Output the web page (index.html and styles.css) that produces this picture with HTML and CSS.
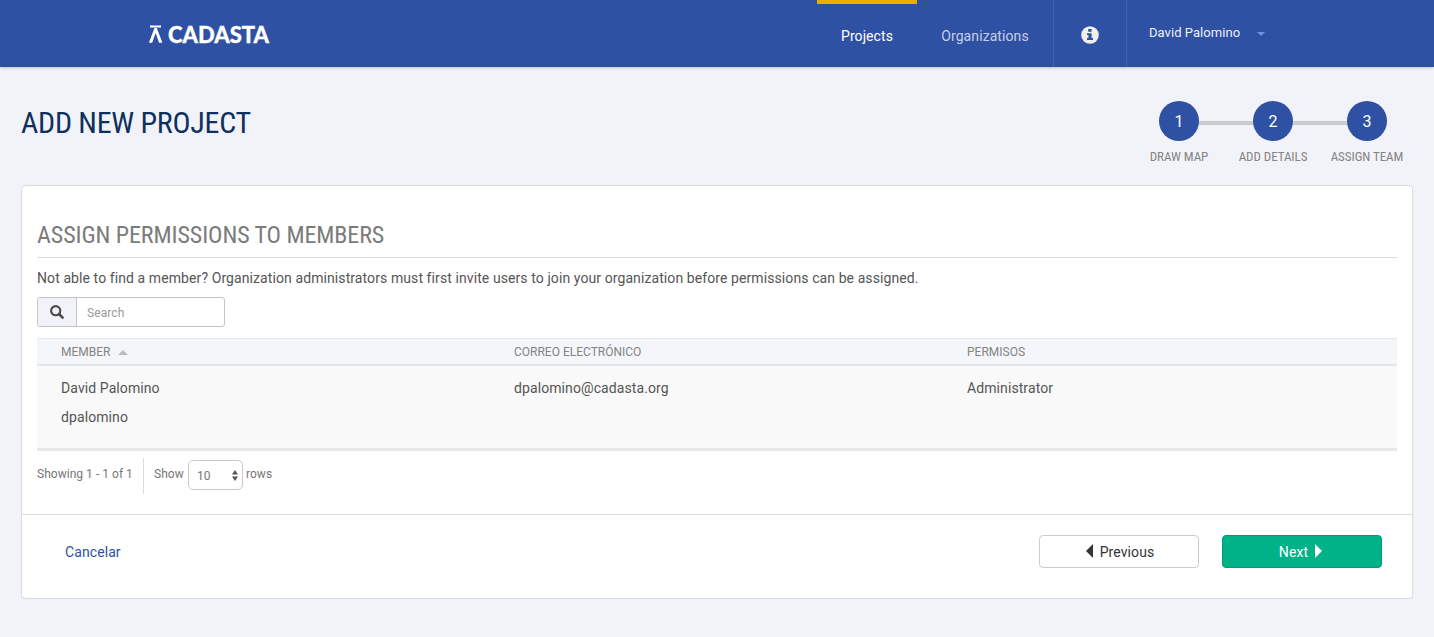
FILE: index.html
```html
<!DOCTYPE html>
<html lang="es">
<head>
<meta charset="utf-8">
<title>Cadasta</title>
<link rel="stylesheet" href="styles.css">
</head>
<body>
<header class="topbar">
  <a class="logo">
    <svg width="130" height="34" viewBox="0 -5 130 34">
      <path d="M2 3.4h11v2.1H2zM6.5 6h2.3l5.6 14.8h-3.3L7.65 11 4.2 20.8H.9z" fill="#fff"/>
      <text class="logo-text" x="20" y="20.6" textLength="101" lengthAdjust="spacingAndGlyphs">CADASTA</text>
    </svg>
  </a>
  <nav class="nav">
    <a class="nav-link active">Projects</a>
    <a class="nav-link">Organizations</a>
    <a class="nav-info">
      <svg width="18" height="18" viewBox="0 0 18 18"><circle cx="9" cy="9" r="8.8" fill="#efefef"/><path d="M7.2 3h3.4v2.7H7.2zM6 7.2h4.6v4.9H12v1.8H6v-1.8h1.4V9H6z" fill="#2e51a3"/></svg>
    </a>
    <a class="nav-user"><span>David Palomino</span><i class="caret"></i></a>
  </nav>
</header>
<main class="page">
  <div class="page-head">
    <h1><span class="condensed">ADD NEW PROJECT</span></h1>
    <ol class="steps">
      <li><b>1</b><span class="condensed">DRAW MAP</span></li>
      <li><b>2</b><span class="condensed">ADD DETAILS</span></li>
      <li><b>3</b><span class="condensed">ASSIGN TEAM</span></li>
    </ol>
  </div>
  <section class="panel">
    <div class="panel-body">
      <h2><span class="condensed">ASSIGN PERMISSIONS TO MEMBERS</span></h2>
      <p class="hint">Not able to find a member? Organization administrators must first invite users to join your organization before permissions can be assigned.</p>
      <div class="search">
        <span class="search-icon"><svg width="14" height="14" viewBox="0 0 14 14"><circle cx="5.7" cy="5.7" r="4.6" fill="none" stroke="#4a4a4a" stroke-width="2.1"/><path d="M9 9l3.6 3.6" stroke="#4a4a4a" stroke-width="2.6" stroke-linecap="round"/></svg></span>
        <span class="search-input">Search</span>
      </div>
      <div class="table">
        <div class="row head"><div><span>MEMBER</span><i class="sort"></i></div><div><span>CORREO ELECTRÓNICO</span></div><div><span>PERMISOS</span></div></div>
        <div class="row data"><div><p>David Palomino</p><p>dpalomino</p></div><div><p>dpalomino@cadasta.org</p></div><div><p>Administrator</p></div></div>
      </div>
      <div class="table-foot">
        <span class="showing">Showing 1 - 1 of 1</span>
        <span class="show">Show</span>
        <span class="select">10<svg width="6" height="11" viewBox="0 0 6 11"><path d="M3 0l3 4.6H0zM3 11L0 6.4h6z" fill="#555"/></svg></span>
        <span>rows</span>
      </div>
    </div>
    <div class="panel-foot">
      <a class="cancel">Cancelar</a>
      <a class="btn prev"><svg width="7" height="14" viewBox="0 0 7 14"><path d="M7 0v14L0 7z" fill="#333"/></svg>Previous</a>
      <a class="btn next">Next<svg width="7" height="14" viewBox="0 0 7 14"><path d="M0 0v14l7-7z" fill="#fff"/></svg></a>
    </div>
  </section>
</main>
</body>
</html>
```
FILE: styles.css
```css
* { box-sizing: border-box; }
body { margin: 0; background: #f2f3f8; color: #555; font: 14px/20px Roboto, "Liberation Sans", sans-serif; letter-spacing: 0.09px; }
h1, h2, p, ol { margin: 0; padding: 0; font-weight: 400; }
svg { display: block; flex: none; }
.condensed { font-family: "Roboto Condensed", Roboto, sans-serif; font-stretch: 75%; letter-spacing: -0.05px; white-space: nowrap; }
.topbar { height: 67px; background: #2e51a3; display: flex; justify-content: space-between; box-shadow: 0 1px 3px rgba(0,0,0,.2); }
.logo { padding: 17px 0 0 148px; }
.logo-text { font: 900 22.5px Lato, sans-serif; fill: #fff; letter-spacing: 0; stroke: #fff; stroke-width: .3px; }
.nav { display: flex; width: 617px; }
.nav-link { width: 100px; border-top: 4px solid transparent; padding-top: 22px; text-align: center; color: #c5cfe6; }
.nav-link + .nav-link { width: 136px; }
.nav-link.active { color: #fff; border-color: #efac00; }
.nav-info { width: 74px; border: solid #3c62ba; border-width: 0 1px; padding: 26px 0 0 27px; }
.nav-user { display: flex; padding: 23px 0 0 22px; font-size: 13px; letter-spacing: 0.05px; color: #eceff7; }
.caret { width: 0; height: 0; border: 4px solid transparent; border-top-color: #6e92dd; border-bottom: 0; margin: 9px 0 0 17px; }
.page { padding: 0 21px; }
.page-head { height: 118px; display: flex; justify-content: space-between; }
h1 { padding-top: 36px; font-size: 30px; line-height: 40px; color: #0e305e; }
h1 .condensed { letter-spacing: -0.27px; }
h2 .condensed { letter-spacing: -0.08px; }
.steps { list-style: none; display: flex; margin: 34px -1px 0 0; }
.steps li { width: 94px; display: flex; flex-direction: column; align-items: center; gap: 6px; font-size: 13px; color: #848484; background: linear-gradient(#ccc, #ccc) 0 20px / 100% 4px no-repeat; }
.steps li:first-child { background-position: 100% 20px; background-size: 50% 4px; }
.steps li:last-child { background-size: 50% 4px; }
.steps b { width: 40px; height: 40px; border-radius: 50%; background: #2e51a3; color: #fff; font: 16px/42px Roboto, sans-serif; text-align: center; }
.panel { height: 414px; background: #fff; border: 1px solid #d8dade; border-radius: 4px; box-shadow: 0 1px 1px rgba(0,0,0,.04); }
.panel-body { height: 328px; padding: 33px 15px 0; }
h2 { height: 39px; border-bottom: 1px solid #ddd; font-size: 24px; line-height: 32px; color: #7b7b7b; }
.hint { padding-top: 10px; white-space: nowrap; }
.search { display: flex; width: 188px; height: 30px; margin-top: 9px; border: 1px solid #c4c4c4; border-radius: 3px; overflow: hidden; font-size: 12px; color: #999; }
.search-icon { width: 39px; border-right: 1px solid #c4c4c4; background: #f2f3f8; padding: 7px 0 0 12px; }
.search-input { padding: 5px 10px; }
.table { margin-top: 11px; border-bottom: 3px solid #e5e7e9; }
.row { display: grid; grid-template-columns: 453px 453px 1fr; }
.row > div { padding-left: 24px; }
.head { height: 28px; border-top: 1px solid #e6e7e9; border-bottom: 2px solid #e3e6e9; background: #f5f6f9; color: #848484; font-size: 12px; line-height: 26px; letter-spacing: 0; }
.head > div { display: flex; }
.sort { width: 0; height: 0; border: 5px solid transparent; border-bottom-color: #bbb; border-top: 0; margin: 11px 0 0 8px; }
.data { height: 82px; background: #f9f9f9; padding-top: 8px; line-height: 29px; }
.table-foot { display: flex; height: 36px; margin-top: 7px; color: #777; font-size: 12px; line-height: 32px; letter-spacing: 0.03px; }
.showing { width: 107px; border-right: 1px solid #ddd; }
.show { margin-left: 10px; width: 34px; }
.select { display: flex; justify-content: space-between; width: 55px; height: 30px; margin: 2px 3px 0 0; padding: 0 4px 0 8px; border: 1px solid #c8c8c8; border-radius: 5px; line-height: 30px; }
.select svg { margin-top: 9px; }
.panel-foot { display: flex; border-top: 1px solid #ddd; padding: 20px 30px 0 43px; }
.cancel { line-height: 34px; color: #2e51a3; margin-right: auto; }
.btn { width: 160px; height: 33px; display: flex; justify-content: center; border: 1px solid #ccc; border-radius: 4px; line-height: 33px; color: #333; gap: 7px; }
.btn svg { margin-top: 8px; }
.prev { padding-left: 2px; }
.next { margin-left: 23px; padding-right: 3px; background: #00b288; border-color: #009a74; color: #fff; }
```
